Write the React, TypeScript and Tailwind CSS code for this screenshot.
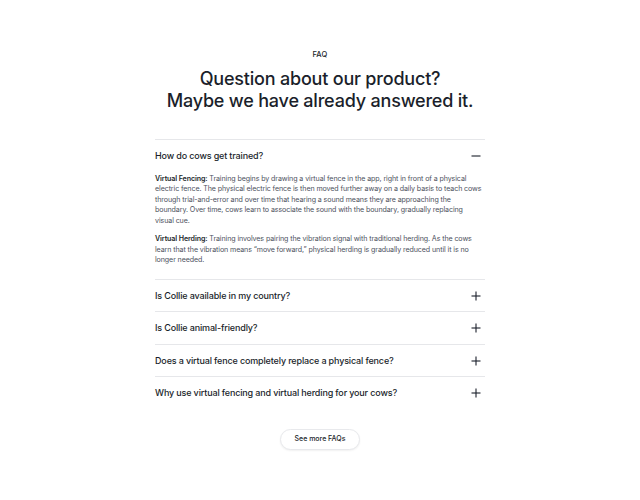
import { useState } from "react";

type Faq = {
  q: string;
  a?: { label: string; text: string }[];
};

const faqs: Faq[] = [
  {
    q: "How do cows get trained?",
    a: [
      {
        label: "Virtual Fencing:",
        text: "Training begins by drawing a virtual fence in the app, right in front of a physical electric fence. The physical electric fence is then moved further away on a daily basis to teach cows through trial-and-error and over time that hearing a sound means they are approaching the boundary. Over time, cows learn to associate the sound with the boundary, gradually replacing visual\u00a0cue.",
      },
      {
        label: "Virtual Herding:",
        text: "Training involves pairing the vibration signal with traditional herding. As the cows learn that the vibration means \u201cmove forward,\u201d physical herding is gradually reduced until it is no longer needed.",
      },
    ],
  },
  { q: "Is Collie available in my country?" },
  { q: "Is Collie animal-friendly?" },
  { q: "Does a virtual fence completely replace a physical fence?" },
  { q: "Why use virtual fencing and virtual herding for your cows?" },
];

function Toggle({ open }: { open: boolean }) {
  return (
    <svg width="10" height="10" viewBox="0 0 10 10" className="shrink-0 text-[#1b1f2b]">
      <path d="M0.5 5h9" stroke="currentColor" strokeWidth="1.1" />
      {!open && <path d="M5 0.5v9" stroke="currentColor" strokeWidth="1.1" />}
    </svg>
  );
}

function FaqItem({ item, open, onToggle, last }: { item: Faq; open: boolean; onToggle: () => void; last: boolean }) {
  return (
    <div className={last ? "" : "border-b border-[#e6e7ea]"}>
      <button
        onClick={onToggle}
        className="flex h-[31.5px] w-full items-center justify-between pr-[4px] text-left text-[9px] font-medium leading-[14px] tracking-[-0.15px] text-[#1b1f2b]"
      >
        {item.q}
        <Toggle open={open} />
      </button>
      {open && item.a && (
        <div className="flex flex-col gap-[7.5px] pb-[13px] pt-[2px] text-[7.1px] leading-[10.6px] tracking-[-0.1px] text-[#4b505c]">
          {item.a.map((p) => (
            <p key={p.label}>
              <span className="font-semibold text-[#1b1f2b]">{p.label}</span> {p.text}
            </p>
          ))}
        </div>
      )}
    </div>
  );
}

export default function App() {
  const [open, setOpen] = useState(0);
  return (
    <div className="min-h-[500px] bg-white font-['Inter',sans-serif]">
      <section className="mx-auto flex w-[330px] flex-col items-center pt-[50px]">
        <p className="text-[7.5px] font-medium leading-[10px] tracking-wide text-[#1b1f2b]">FAQ</p>
        <h2 className="mt-[8px] text-center text-[18px] font-medium leading-[22px] tracking-[-0.2px] text-[#1b1f2b]">
          Question about our product?
          <br />
          Maybe we have already answered it.
        </h2>
        <div className="mt-[27px] w-full border-t border-[#e6e7ea]">
          {faqs.map((f, i) => (
            <FaqItem
              key={f.q}
              item={f}
              open={open === i}
              last={i === faqs.length - 1}
              onToggle={() => setOpen(open === i ? -1 : i)}
            />
          ))}
        </div>
        <button className="mt-[20px] h-[21px] w-[80px] rounded-full border border-[#e8e9ec] bg-white text-[7px] font-medium text-[#1b1f2b] shadow-[0_1px_2px_rgba(0,0,0,0.06)]">
          See more FAQs
        </button>
      </section>
    </div>
  );
}
